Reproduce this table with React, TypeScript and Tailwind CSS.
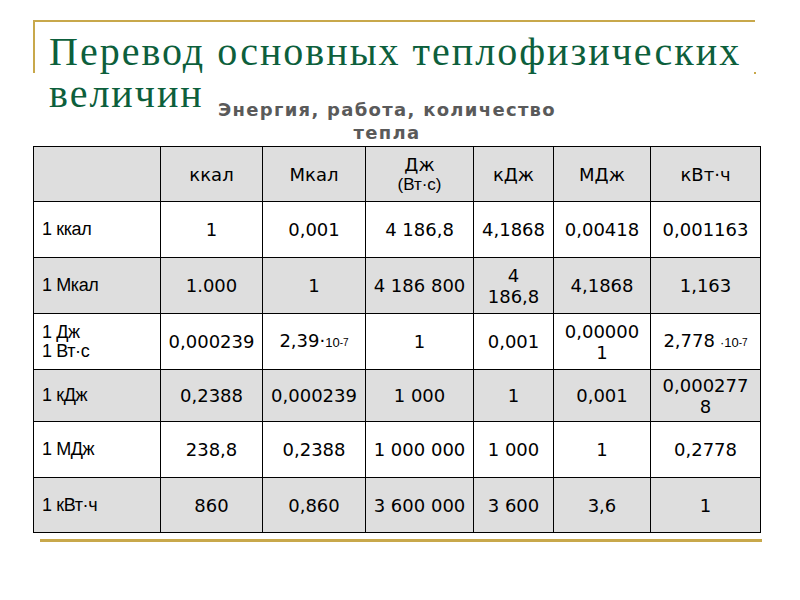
import React from 'react'

const cols = [127, 102, 103, 108, 80, 97, 110]
const heights = [55, 56, 56, 56, 52, 56, 55]

function Exp({ base, gap }: { base: string; gap?: boolean }) {
  return (
    <span>
      {base}
      {gap ? <span className="ml-[5px]" /> : '·'}
      <span className="font-['Liberation_Sans',sans-serif] text-[13px]">
        {gap ? '·' : ''}10<sup className="text-[10px] relative -top-[1px]">-7</sup>
      </span>
    </span>
  )
}

type Row = { label: React.ReactNode; cells: React.ReactNode[] }

const rows: Row[] = [
  { label: '1 ккал', cells: ['1', '0,001', '4 186,8', '4,1868', '0,00418', '0,001163'] },
  {
    label: '1 Мкал',
    cells: ['1.000', '1', '4 186 800', <>4<br />186,8</>, '4,1868', '1,163'],
  },
  {
    label: <>1 Дж<br />1 Вт·с</>,
    cells: ['0,000239', <Exp base="2,39" />, '1', '0,001', <>0,00000<br />1</>, <Exp base="2,778" gap />],
  },
  { label: '1 кДж', cells: ['0,2388', '0,000239', '1 000', '1', '0,001', <>0,000277<br />8</>] },
  { label: '1 МДж', cells: ['238,8', '0,2388', '1 000 000', '1 000', '1', '0,2778'] },
  { label: '1 кВт·ч', cells: ['860', '0,860', '3 600 000', '3 600', '3,6', '1'] },
]

export default function App() {
  return (
    <div className="w-[800px] h-[600px] bg-white overflow-hidden">
      {/* Title frame */}
      <div className="relative mt-[20px] ml-[33px] w-[722px] h-[53px] border-t-2 border-l-2 border-[#c8a84b] pl-[14px] pt-[9px]">
        <h1 className="font-['Liberation_Serif',serif] text-[40px] leading-[42px] tracking-[2px] text-[#0d5f3c] whitespace-nowrap">
          Перевод основных теплофизических
          <br />
          величин
        </h1>
        <div className="absolute -right-[1px] -bottom-[1px] w-[2px] h-[2px] bg-[#c8a84b]" />
      </div>

      {/* Subtitle */}
      <div className="mt-[25px] ml-[190px] w-[394px] text-center font-['DejaVu_Sans',sans-serif] font-bold text-[18px] leading-[23px] tracking-[1.3px] text-[#5a5a5a]">
        Энергия, работа, количество
        <br />
        тепла
      </div>

      {/* Table */}
      <table className="mt-[2px] ml-[33px] border-collapse table-fixed w-[727px] font-['DejaVu_Sans',sans-serif] text-[18px] text-black">
        <colgroup>
          {cols.map((w, i) => (
            <col key={i} style={{ width: w }} />
          ))}
        </colgroup>
        <tbody>
          <tr className="bg-[#dedede]" style={{ height: heights[0] }}>
            <td className="border border-black" />
            <td className="border border-black text-center">ккал</td>
            <td className="border border-black text-center">Мкал</td>
            <td className="border border-black text-center leading-[19px]">
              Дж
              <br />
              <span className="font-['Liberation_Sans',sans-serif] text-[17px]">(Вт·с)</span>
            </td>
            <td className="border border-black text-center">кДж</td>
            <td className="border border-black text-center">МДж</td>
            <td className="border border-black text-center">кВт·ч</td>
          </tr>
          {rows.map((r, i) => (
            <tr
              key={i}
              className={i % 2 === 1 ? 'bg-[#dedede]' : 'bg-white'}
              style={{ height: heights[i + 1] }}
            >
              <td className="border border-black px-[8px] font-['Liberation_Sans',sans-serif] text-[18px] leading-[19px] tracking-[-0.4px] whitespace-nowrap">
                {r.label}
              </td>
              {r.cells.map((c, j) => (
                <td key={j} className="border border-black text-center leading-[21px] whitespace-nowrap">
                  {c}
                </td>
              ))}
            </tr>
          ))}
        </tbody>
      </table>

      {/* Bottom rule */}
      <div className="mt-[6px] ml-[40px] w-[722px] h-[3px] bg-[#c8a84b]" />
    </div>
  )
}
